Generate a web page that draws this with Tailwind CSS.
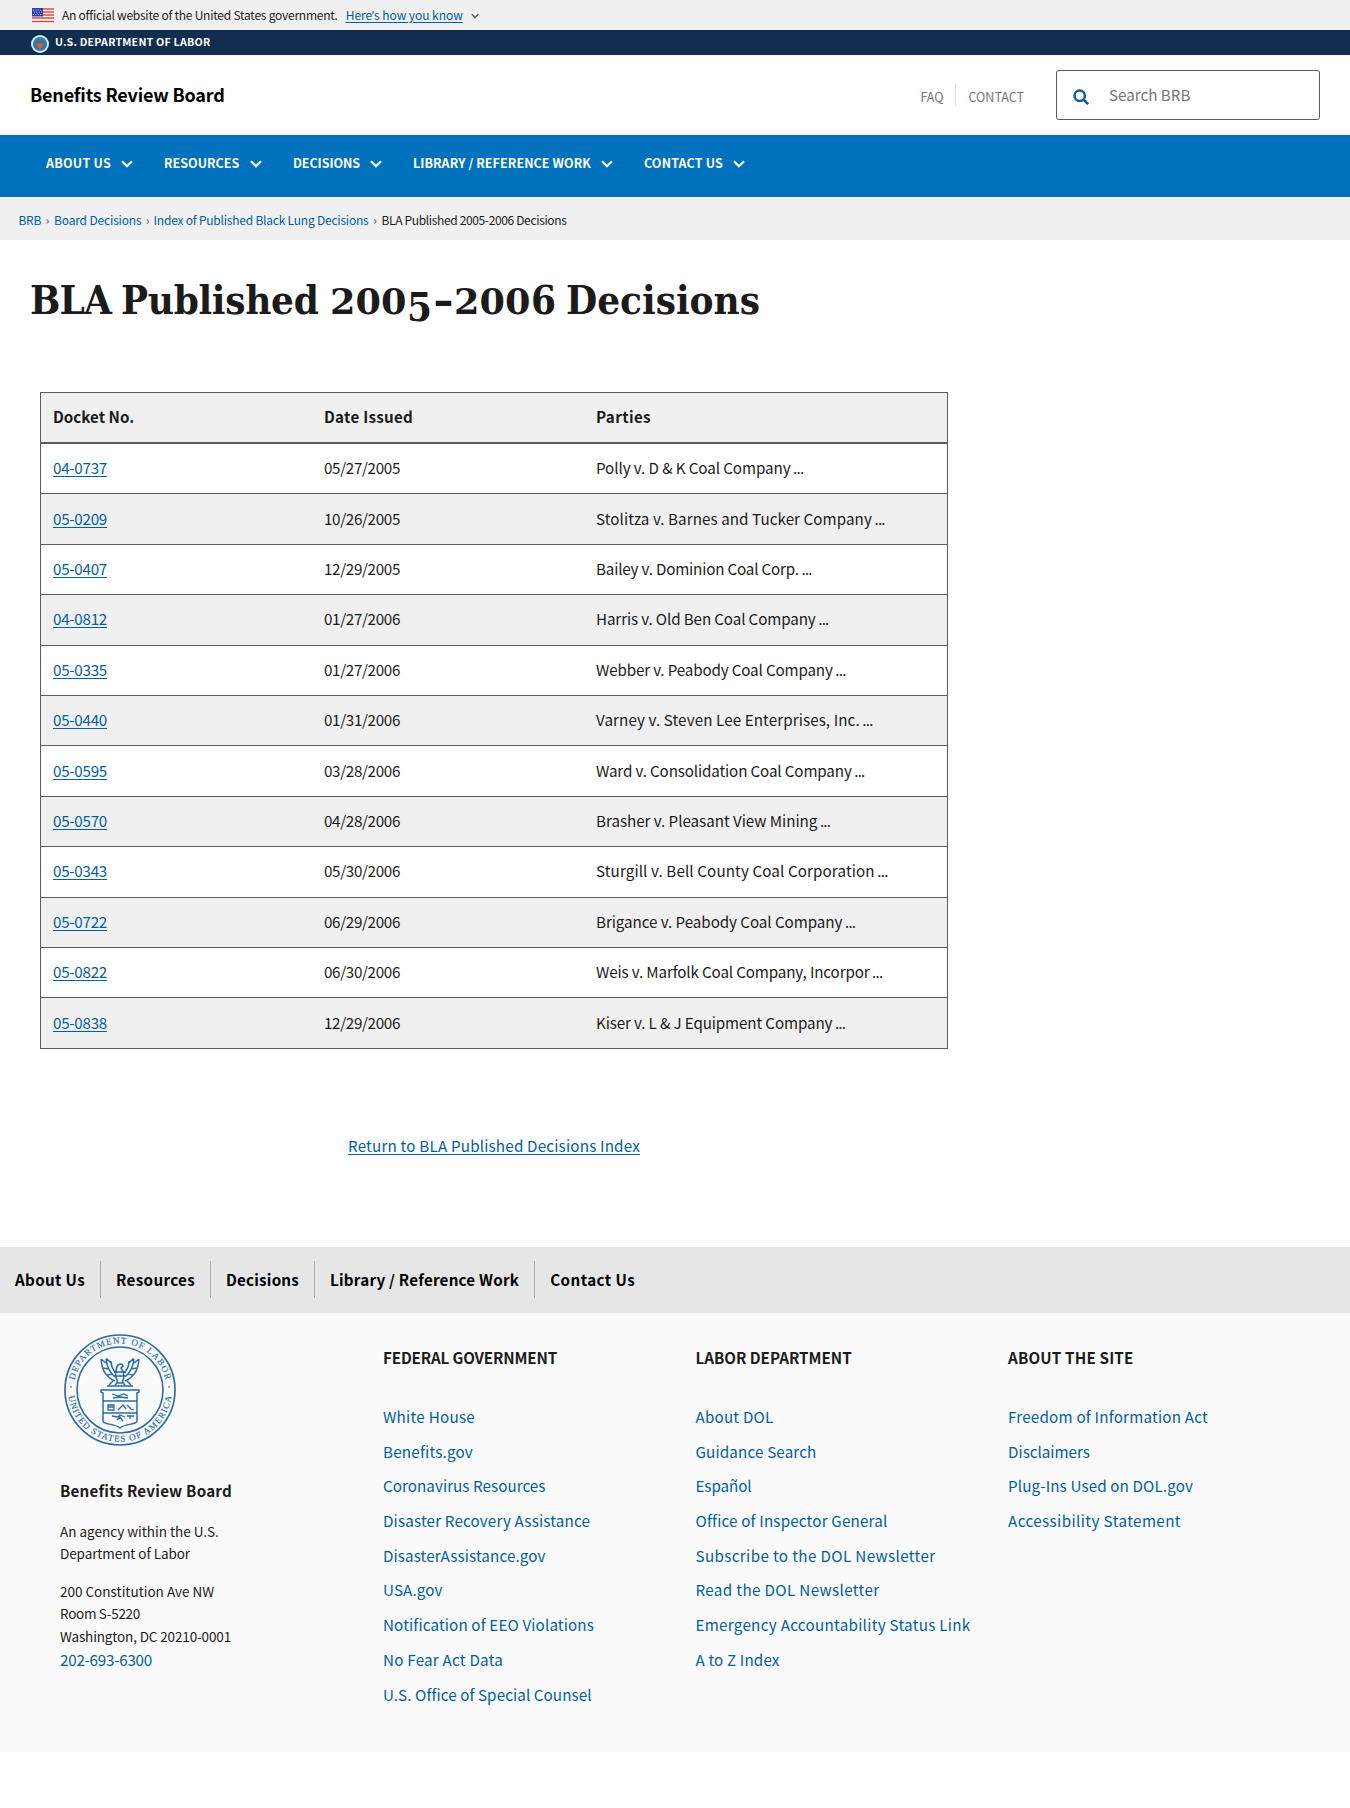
<!DOCTYPE html>
<html lang="en">
<head>
<meta charset="utf-8">
<title>BLA Published 2005-2006 Decisions</title>
<script src="https://cdn.jsdelivr.net/npm/@tailwindcss/browser@4"></script>
</head>
<body class="bg-white text-[#1b1b1b] font-['Noto_Sans_CJK_SC','Source_Sans_Pro',sans-serif] text-[15.2px] leading-6 whitespace-nowrap">

<div class="h-[30px] bg-[#f0f0f0] flex items-center pl-8 text-[12px] leading-[30px]">
  <svg class="w-[22px] h-[15px] shrink-0" viewBox="0 0 22 15"><rect width="22" height="15" fill="#fff"/><path d="M0 1h22M0 4h22M0 7h22M0 10h22M0 13.5h22" stroke="#e0453c" stroke-width="1.4"/><rect width="11" height="8.5" fill="#2b3fae"/><path d="M1 2h9M2 4.2h8M1 6.5h9" stroke="#cfd6ff" stroke-width="1" stroke-dasharray="1 1.4"/></svg>
  <span class="ml-2 tracking-[-0.24px]">An official website of the United States government.</span>
  <a class="ml-2 tracking-[-0.05px] text-[#005ea2] underline underline-offset-2">Here<span class="font-['Open_Sans']">’</span>s how you know</a>
  <svg class="ml-2 w-2 h-2 mt-0.5" viewBox="0 0 8 8" fill="none" stroke="#3a5a70" stroke-width="1.3"><path d="M.7 2.2 4 5.5l3.3-3.3"/></svg>
</div>

<div class="h-[25px] bg-[#112e51] text-white flex items-start pl-[31px] font-bold text-[10.7px] leading-[24px]">
  <svg class="w-[18px] h-[18px] mt-[5px]" viewBox="0 0 18 18"><circle cx="9" cy="9" r="9" fill="#dbe6ee"/><circle cx="9" cy="9" r="7" fill="#1f7fc4"/><path d="M5 5.2c1.5 0 2.6.8 4 2 1.4-1.2 2.500-2 4-2-.5 2-2 3.500-4 3.500s-3.500-1.500-4-3.500z" fill="#6c6a4c"/><path d="M6.500 8h5v4.500L9 14.500l-2.500-2z" fill="#e2562d"/><path d="M9 3v4" stroke="#3b8f6a"/></svg>
  <span class="ml-[6px] tracking-[0.2px]">U.S. DEPARTMENT OF LABOR</span>
</div>

<header class="h-20 flex items-center px-[30px]">
  <a class="font-bold text-black text-[18px] tracking-[-0.19px] pb-[2px]">Benefits Review Board</a>
  <div class="ml-auto flex items-center text-[#71767a] text-[12.5px]">
    <span class="pt-[3px]">FAQ</span>
    <span class="ml-[11px] mr-[13px] w-px h-[22px] bg-[#dfe1e2]"></span>
    <span class="pt-[3px]">CONTACT</span>
  </div>
  <div class="ml-8 w-[264px] h-[50px] border border-[#565c65] rounded-[3px] flex items-center pl-4">
    <svg class="w-4 h-4 mt-[3px]" viewBox="0 0 16 16" fill="none" stroke="#0b5a9d" stroke-width="2.5"><circle cx="6.7" cy="6.7" r="5.2"/><path d="m10.5 10.5 4.7 4.7"/></svg>
    <span class="ml-[20px] pb-[2px] text-[#71767a]">Search BRB</span>
  </div>
</header>

<nav class="h-[62px] bg-[#0071bc] text-white font-bold text-[12.5px] leading-[55px] flex pl-[46px] gap-[31px]">
  <a class="flex items-start gap-[10px]"><span class="w-[65px] tracking-[0.23px]">ABOUT US</span><svg class="w-3 h-2 mt-[25px]" viewBox="0 0 12 8" fill="none" stroke="#fff" stroke-width="2.2"><path d="M1 1.200l5 5 5-5"/></svg></a>
  <a class="flex items-start gap-[10px]"><span class="w-[76px]">RESOURCES</span><svg class="w-3 h-2 mt-[25px]" viewBox="0 0 12 8" fill="none" stroke="#fff" stroke-width="2.2"><path d="M1 1.200l5 5 5-5"/></svg></a>
  <a class="flex items-start gap-[10px]"><span class="w-[67px] tracking-[-0.07px]">DECISIONS</span><svg class="w-3 h-2 mt-[25px]" viewBox="0 0 12 8" fill="none" stroke="#fff" stroke-width="2.2"><path d="M1 1.200l5 5 5-5"/></svg></a>
  <a class="flex items-start gap-[10px]"><span class="w-[178px] tracking-[0.08px]">LIBRARY / REFERENCE WORK</span><svg class="w-3 h-2 mt-[25px]" viewBox="0 0 12 8" fill="none" stroke="#fff" stroke-width="2.2"><path d="M1 1.200l5 5 5-5"/></svg></a>
  <a class="flex items-start gap-[10px]"><span class="w-[79px] tracking-[0.15px]">CONTACT US</span><svg class="w-3 h-2 mt-[25px]" viewBox="0 0 12 8" fill="none" stroke="#fff" stroke-width="2.2"><path d="M1 1.200l5 5 5-5"/></svg></a>
</nav>

<div class="h-[43px] bg-[#f0f0f0] flex items-center pl-[18.5px] pt-[2px] text-[12px] text-[#005ea2]">
  <a class="tracking-[-0.3px]">BRB</a><span class="w-[13px] text-center text-[#555]">›</span>
  <a class="tracking-[-0.155px]">Board Decisions</a><span class="w-[12px] text-center text-[#555]">›</span>
  <a class="tracking-[-0.216px]">Index of Published Black Lung Decisions</a><span class="w-[13px] text-center text-[#555]">›</span>
  <span class="tracking-[-0.354px] text-[#1b1b1b]">BLA Published 2005-2006 Decisions</span>
</div>

<main class="pt-[35px]">
  <h1 class="ml-[30px] flex items-baseline font-['DejaVu_Serif_Condensed','DejaVu_Serif',serif] [font-stretch:condensed] font-bold text-[40px] leading-[50px] h-[50px]">
    <span class="w-[91px] tracking-[-0.8px]">BLA </span>
    <span class="w-[209px] tracking-[-0.3px]">Published </span>
    <span class="w-[77px] text-[34.5px] origin-left scale-x-[1.18]">200</span>
    <span class="w-[26px] relative top-[7px]">5</span>
    <span class="w-[21px] origin-left scale-x-[1.4]">-</span>
    <span class="w-[77px] text-[34.5px] origin-left scale-x-[1.18]">200</span>
    <span class="w-[35px]">6 </span>
    <span>Decisions</span>
  </h1>

  <div id="rows" class="mt-[67px] ml-10 w-[908px] border border-b-0 border-[#565c65]">
    <div class="grid grid-cols-[271px_272px_1fr] items-center h-[51px] border-b-2 border-[#565c65] bg-[#f0f0f0] pl-3 pb-[3px] font-bold"><span>Docket No.</span><span class="tracking-[0.25px]">Date Issued</span><span class="tracking-[0.36px]">Parties</span></div>
  </div>

  <p class="mt-[84px] ml-10 w-[908px] text-center"><a class="tracking-[0.19px] text-[#005ea2] underline underline-offset-2">Return to BLA Published Decisions Index</a></p>
</main>

<footer class="mt-[90px]">
  <div class="h-[66px] bg-[#e6e6e6] flex items-center font-bold text-black">
    <a class="h-[37px] leading-[36px] px-[15px] tracking-[0.34px]">About Us</a>
    <a class="border-l border-[#adadad] h-[37px] leading-[36px] px-[15px] tracking-[0.33px]">Resources</a>
    <a class="border-l border-[#adadad] h-[37px] leading-[36px] px-[15px] tracking-[0.2px]">Decisions</a>
    <a class="border-l border-[#adadad] h-[37px] leading-[36px] px-[15px] tracking-[0.22px]">Library / Reference Work</a>
    <a class="border-l border-[#adadad] h-[37px] leading-[36px] px-[15px] tracking-[0.43px]">Contact Us</a>
  </div>
  <div class="h-[439px] bg-[#fafafa] pl-[60px] grid grid-cols-[323px_312.5px_312.5px_1fr]">
    <div>
      <svg class="ml-1 mt-[21px] w-28 h-28" viewBox="0 0 112 112" fill="none" stroke="#2a6ca8">
        <circle cx="56" cy="56" r="55" stroke-width="1.7"/><circle cx="56" cy="56" r="43" stroke-width="1.6"/>
        <defs><path id="arcTop" d="M9.500 56a46.500 46.500 0 0 1 93 0"/><path id="arcBottom" d="M4.200 56a51.800 51.800 0 0 0 103.600 0"/></defs>
        <g fill="#2a6ca8" stroke="#2a6ca8" stroke-width=".15" font-family="Liberation Serif, serif" font-size="9"><text textLength="126" text-anchor="middle"><textPath href="#arcTop" startOffset="50%">DEPARTMENT OF LABOR</textPath></text><text textLength="150" text-anchor="middle"><textPath href="#arcBottom" startOffset="50%">UNITED STATES OF AMERICA</textPath></text><circle cx="7" cy="53" r=".8"/><circle cx="105" cy="53" r=".8"/></g>
        <path d="M37 25c1 12 6 19 14 22M42 25c1 8 4 14 9 18M47 27c0 5 2 9 5 12M75 25c-1 12-6 19-14 22M70 25c-1 8-4 14-9 18M65 27c0 5-2 9-5 12M37 25l5 4 1-4 5 5M75 25l-5 4-1-4-5 5M39 34l6 1M73 34l-6 1M43 41l6-1M69 41l-6-1" stroke-width="1.500"/>
        <path d="M53 33c0-3 5-4 6-1l-2 2c3 4 4 9 1 15h-4c-3-6-3-11-1-16zM49 47l-4 4M53 48l-2 4M59 48l2 4M63 47l4 4M43 52h26M50 38h12M50 42h12" stroke-width="1.600"/>
        <path d="M37 56h38v2l-2 1v28c0 4-11 2-17 7-6-5-17-3-17-7V59l-2-1zM39 67h34M39 79h34" stroke-width="1.500"/>
        <path d="M48 60l6 2 6-2 4 2M49 64l7-1 8 1M44 71h6v5h-6zM44 73h6M54 76l5-5 3 4M63 71l4 4 3 1M48 82l6 1 2-2 5 2M53 86l3-3 3 4M63 82h7M66 82v3" stroke-width="1.300"/>
      </svg>
      <p class="mt-[32px] font-bold tracking-[0.21px]">Benefits Review Board</p>
      <p class="mt-[18px] text-[13.5px] leading-[22.4px]">An agency within the U.S.<br><span class="tracking-[-0.08px]">Department of Labor</span></p>
      <p class="mt-[15px] text-[13.5px] leading-[22.4px]">200 Constitution Ave NW<br><span class="tracking-[-0.29px]">Room S-5220</span><br><span class="tracking-[-0.137px]">Washington, DC 20210-0001</span></p>
      <a class="text-[#005ea2] tracking-[-0.237px]">202-693-6300</a>
    </div>
    <div class="pt-8"><h3 class="font-bold tracking-[-0.148px]">FEDERAL GOVERNMENT</h3>
      <ul class="mt-[30px] text-[#005ea2] leading-[34.7px]">
        <li class="tracking-[0.268px]">White House</li>
        <li class="tracking-[0.211px]">Benefits.gov</li>
        <li class="tracking-[0.052px]">Coronavirus Resources</li>
        <li class="tracking-[0.166px]">Disaster Recovery Assistance</li>
        <li class="tracking-[0.113px]">DisasterAssistance.gov</li>
        <li class="tracking-[0.116px]">USA.gov</li>
        <li class="tracking-[0.136px]">Notification of EEO Violations</li>
        <li class="tracking-[0.226px]">No Fear Act Data</li>
        <li class="tracking-[0.09px]">U.S. Office of Special Counsel</li>
      </ul></div>
    <div class="pt-8"><h3 class="font-bold">LABOR DEPARTMENT</h3>
      <ul class="mt-[30px] text-[#005ea2] leading-[34.7px]">
        <li class="tracking-[0.207px]">About DOL</li>
        <li class="tracking-[0.149px]">Guidance Search</li>
        <li class="tracking-[-0.08px]">Español</li>
        <li class="tracking-[0.175px]">Office of Inspector General</li>
        <li class="tracking-[0.37px]">Subscribe to the DOL Newsletter</li>
        <li class="tracking-[0.362px]">Read the DOL Newsletter</li>
        <li class="tracking-[0.281px]">Emergency Accountability Status Link</li>
        <li class="tracking-[0.15px]">A to Z Index</li>
      </ul></div>
    <div class="pt-8"><h3 class="font-bold tracking-[0.166px]">ABOUT THE SITE</h3>
      <ul class="mt-[30px] text-[#005ea2] leading-[34.7px]">
        <li class="tracking-[0.211px]">Freedom of Information Act</li>
        <li>Disclaimers</li>
        <li class="tracking-[0.13px]">Plug-Ins Used on DOL.gov</li>
        <li class="tracking-[0.408px]">Accessibility Statement</li>
      </ul></div>
  </div>
</footer>
<script>
const rows = [
  ["04-0737", "05/27/2005", "Polly v. D &amp; K Coal Company", "tracking-[-0.089px]"],
  ["05-0209", "10/26/2005", "Stolitza v. Barnes and Tucker Company", "tracking-[0.065px]"],
  ["05-0407", "12/29/2005", "Bailey v. Dominion Coal Corp.", "tracking-[-0.183px]"],
  ["04-0812", "01/27/2006", "Harris v. Old Ben Coal Company", "tracking-[-0.122px]"],
  ["05-0335", "01/27/2006", "Webber v. Peabody Coal Company", "tracking-[-0.149px]"],
  ["05-0440", "01/31/2006", "Varney v. Steven Lee Enterprises, Inc.", "tracking-[0.096px]"],
  ["05-0595", "03/28/2006", "Ward v. Consolidation Coal Company", "tracking-[-0.138px]"],
  ["05-0570", "04/28/2006", "Brasher v. Pleasant View Mining", "tracking-[-0.038px]"],
  ["05-0343", "05/30/2006", "Sturgill v. Bell County Coal Corporation", "tracking-[0.108px]"],
  ["05-0722", "06/29/2006", "Brigance v. Peabody Coal Company", "tracking-[-0.062px]"],
  ["05-0822", "06/30/2006", "Weis v. Marfolk Coal Company, Incorpor", "tracking-[-0.139px]"],
  ["05-0838", "12/29/2006", "Kiser v. L &amp; J Equipment Company", "tracking-[-0.128px]"]
];
document.getElementById('rows').insertAdjacentHTML('beforeend', rows.map(([no, date, parties, spacing]) => `
  <div class="grid grid-cols-[271px_272px_1fr] items-center h-[50.42px] border-b border-[#565c65] even:bg-white odd:bg-[#f0f0f0] pl-3 pb-[3px]">
    <span><a class="tracking-[-0.266px] text-[#005ea2] underline underline-offset-2">${no}</a></span>
    <span class="tracking-[-0.334px]">${date}</span>
    <span class="${spacing}">${parties}<span class="tracking-[-0.8px]"> ...</span></span>
  </div>`).join(''));
</script>
</body>
</html>
